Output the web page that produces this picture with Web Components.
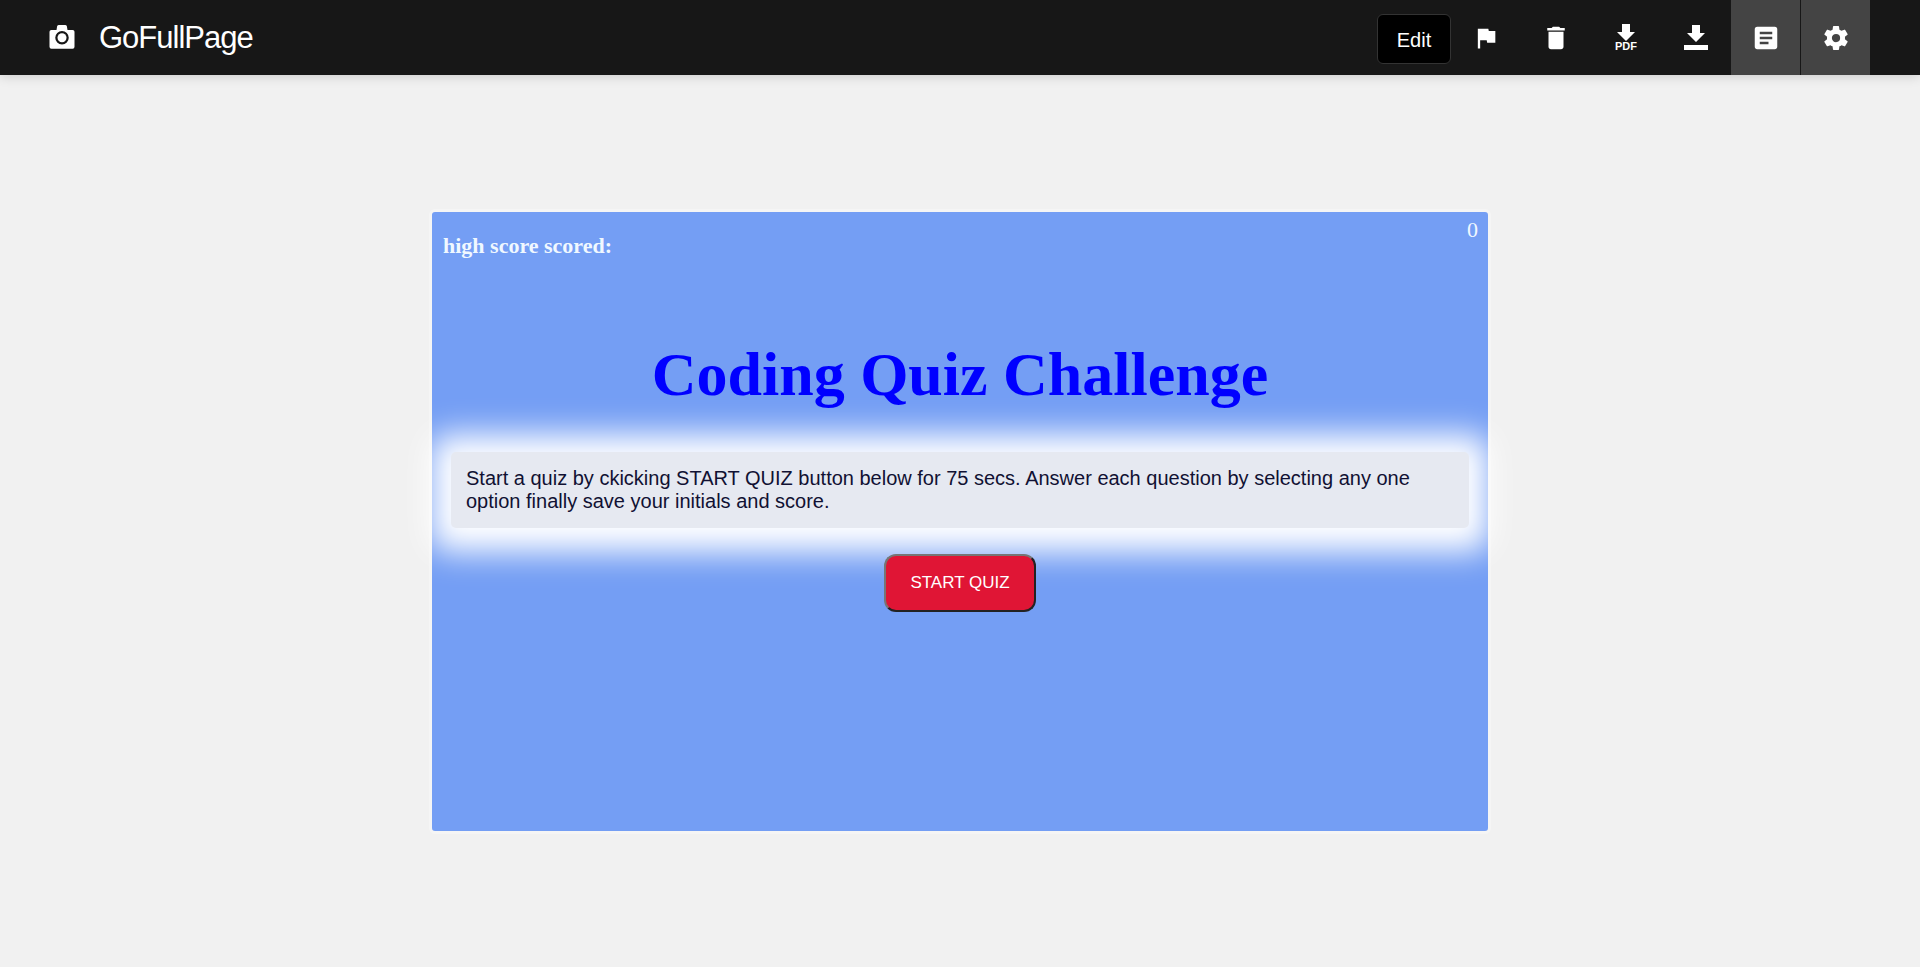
<!DOCTYPE html>
<html lang="en">
<head>
<meta charset="utf-8">
<title>GoFullPage</title>
<style>
body { margin: 0; background: #f1f1f1; font-family: "Liberation Sans", Arial, sans-serif; }
</style>
</head>
<body>
<page-shell>
  <tool-bar slot="header">
    <tool-button label="Report an issue"><svg width="28" height="28" viewBox="0 0 24 24" fill="#fff"><path d="M14.4 6 14 4H5v17h2v-7h5.600l.4 2h7V6z"/></svg></tool-button>
    <tool-button label="Delete"><svg width="30" height="30" viewBox="0 0 24 24" fill="#fff"><path d="M6 19c0 1.100.9 2 2 2h8c1.100 0 2-.9 2-2V7H6zM19 4h-3.500l-1-1h-5l-1 1H5v2h14z"/></svg></tool-button>
    <tool-button label="Download" caption="PDF"><svg width="18" height="17" viewBox="0 0 18 17" fill="#fff"><path d="M5 0h8v8h5l-9 9-9-9h5z"/></svg></tool-button>
    <tool-button label="Download image"><svg width="24" height="26" viewBox="0 0 24 26" fill="#fff"><path d="M8 0h8v8h5l-9 9-9-9h5zM0 20h24v5H0z"/></svg></tool-button>
    <tool-button label="Files" active><svg width="30" height="30" viewBox="0 0 24 24" fill="#fff"><path d="M19 3H5a2 2 0 0 0-2 2v14c0 1.100.9 2 2 2h14c1.100 0 2-.9 2-2V5a2 2 0 0 0-2-2zm-5 14H7v-2h7zm3-4H7v-2h10zm0-4H7V7h10z"/></svg></tool-button>
    <tool-button label="Settings" active><svg width="30" height="30" viewBox="0 0 24 24" fill="#fff"><path d="M19.140 12.940c.04-.3.060-.61.060-.94 0-.32-.02-.64-.07-.94l2.030-1.580a.49.49 0 0 0 .12-.61l-1.920-3.320a.488.488 0 0 0-.59-.22l-2.390.96c-.5-.38-1.030-.7-1.620-.94l-.36-2.540a.484.484 0 0 0-.48-.41h-3.840c-.24 0-.43.17-.47.41l-.36 2.540c-.59.24-1.130.57-1.620.94l-2.390-.96a.48.48 0 0 0-.59.22L2.740 8.870c-.12.21-.08.47.12.61l2.030 1.580c-.05.3-.09.63-.09.94s.02.64.07.94l-2.030 1.580a.49.49 0 0 0-.12.61l1.920 3.320c.12.22.37.29.59.22l2.390-.96c.5.38 1.030.7 1.620.94l.36 2.540c.05.24.24.41.48.41h3.840c.24 0 .44-.17.47-.41l.36-2.540c.59-.24 1.130-.56 1.620-.94l2.390.96c.22.08.47 0 .59-.22l1.920-3.320a.48.48 0 0 0-.12-.61zM12 15.300A3.300 3.300 0 1 1 12 8.700a3.300 3.300 0 0 1 0 6.600z"/></svg></tool-button>
  </tool-bar>
  <quiz-card score="0">
    <span slot="title">Coding Quiz Challenge</span>
    Start a quiz by ckicking START QUIZ button below for 75 secs. Answer each question by selecting any one option finally save your initials and score.
  </quiz-card>
</page-shell>
<script>
function define(name, html) {
  const template = document.createElement('template');
  template.innerHTML = html;
  customElements.define(name, class extends HTMLElement {
    constructor() {
      super();
      this.attachShadow({ mode: 'open' }).append(template.content.cloneNode(true));
    }
    connectedCallback() {
      for (const node of this.shadowRoot.querySelectorAll('[data-text]'))
        node.textContent = this.getAttribute(node.dataset.text) || '';
      if (this.hasAttribute('label'))
        this.shadowRoot.querySelector('button').setAttribute('aria-label', this.getAttribute('label'));
    }
  });
}

define('page-shell', `
<style>
  :host { display: flex; flex-direction: column; min-height: 100vh; }
  main { padding: 134px 0; display: flex; justify-content: center; }
</style>
<slot name="header"></slot>
<main><slot></slot></main>`);

define('tool-bar', `
<style>
  :host { display: flex; align-items: stretch; height: 75px; padding: 0 50px 0 47px; box-sizing: border-box;
    background: #171717; color: #fff; box-shadow: 0 0 12px rgba(0,0,0,.2); }
  .brand { display: flex; align-items: center; gap: 22px; color: inherit; text-decoration: none; }
  .brand svg { display: block; }
  .name { font-size: 31px; line-height: 36px; letter-spacing: -1px; }
  nav { display: flex; margin-left: auto; align-items: stretch; }
  .edit { align-self: center; height: 50px; width: 74px; margin-top: 3px; padding: 2px 0 0; border: 1px solid #333; border-radius: 6px;
    background: #000; color: #fff; font: 20px "Liberation Sans", Arial, sans-serif; }
</style>
<a class="brand" href="#"><svg width="30" height="30" viewBox="0 1 24 24" fill="#fff"><path fill-rule="evenodd" d="M9.500 2.500a1.500 1.500 0 0 0-1.400 1L7.600 6.500H3.500A1.500 1.500 0 0 0 2 8v12a1.500 1.500 0 0 0 1.500 1.500h17A1.500 1.500 0 0 0 22 20V8a1.500 1.500 0 0 0-1.500-1.500h-4.100L15.900 3.500a1.500 1.500 0 0 0-1.400-1zM12 7.400a5.400 5.400 0 1 1 0 10.800 5.400 5.400 0 0 1 0-10.800z"/><circle cx="12" cy="12.800" r="3.600"/></svg><span class="name">GoFullPage</span></a>
<nav><button class="edit">Edit</button><slot></slot></nav>`);

define('tool-button', `
<style>
  :host { display: flex; box-sizing: border-box; width: 70px; }
  :host([active]) { border-right: 1px solid #171717; }
  :host([active]:last-child) { width: 69px; border: 0; }
  button { flex: 1; display: flex; flex-direction: column; align-items: center; justify-content: center; gap: 1px;
    padding: 0; border: 0; background: none; color: #fff; }
  :host([active]) button { background: #444; }
  .caption { font: bold 11px/9px "Liberation Sans", Arial, sans-serif; }
  .caption:empty { display: none; }
</style>
<button><slot></slot><span class="caption" data-text="caption"></span></button>`);

define('quiz-card', `
<style>
  :host { display: block; width: 55%; min-height: 619px; border: 3px solid #f5f5f5; border-radius: 6px; background: #749ef4;
    font-family: "Liberation Serif", "Times New Roman", serif; color: #f0f8ff; }
  header { display: flex; justify-content: space-between; align-items: flex-start; padding: 4px 10px 0 11px; height: 92px; font-size: 22px; line-height: 28px; }
  h2 { margin: 16px 0 0; font-size: 22px; line-height: 28px; }
  h1 { margin: 28px 0 0; text-align: center; color: #00f; font-size: 62px; line-height: 76px; }
  p { margin: 40px 19px 0; padding: 15px; border-radius: 5px; background: #e6e9f1; color: #111133;
    box-shadow: 0 3px 32px 21px #fff; font: 20px/23px "Liberation Sans", Arial, sans-serif; }
  .start { position: relative; display: block; margin: 26px auto 0; padding: 18px 24px; border: 2px solid; border-color: #767676 #222 #222 #767676; border-radius: 12px;
    background: #e01535; color: #fff; font: 17px/18px "Liberation Sans", Arial, sans-serif; }
</style>
<header><h2>high score scored:</h2><span data-text="score"></span></header>
<h1><slot name="title"></slot></h1>
<p><slot></slot></p>
<button class="start">START QUIZ</button>`);
</script>
</body>
</html>
